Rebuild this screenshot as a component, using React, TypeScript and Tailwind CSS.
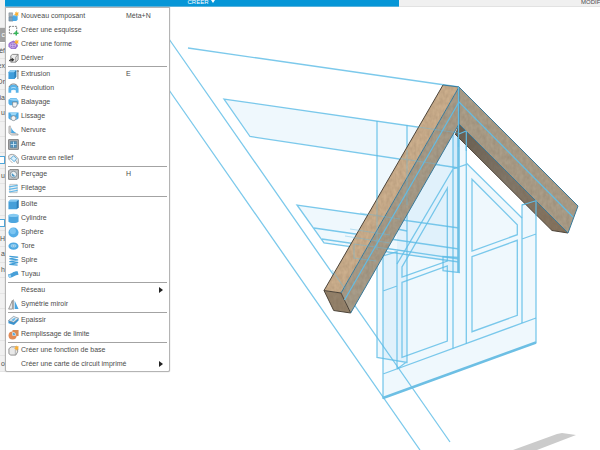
import type { ReactNode } from "react";

type Item = { label: string; icon?: ReactNode; shortcut?: string; submenu?: boolean };

const star = <path d="M9.2 0l.8 1.7 1.9-.1-1 1.6.9 1.7-1.8-.2-1 1.5-.7-1.8-1.8-.4 1.5-1.1-.2-1.9 1.5.9z" fill="#fbb034" />;

const icons = {
  component: (
    <>
      <path d="M1 2h4v4H1z" fill="#aab4bc" stroke="#7c8790" strokeWidth=".6" />
      <path d="M1 6.500h4.500v4.500H1z" fill="#7fa0b8" stroke="#6a7f90" strokeWidth=".6" />
      <path d="M5 5.500l1.500-1h4v5L9 11H5z" fill="#4aa8e4" />
      <path d="M5 5.500l1.500-1h4L9 5.800z" fill="#8fd0f6" />
      {star}
    </>
  ),
  sketch: (
    <>
      <path d="M1.500 1.500h8v8h-8z" fill="none" stroke="#666" strokeWidth=".9" strokeDasharray="2 1" />
      <path d="M9 6.500v5M6.500 9h5" stroke="#35b558" strokeWidth="1.700" />
    </>
  ),
  form: (
    <>
      <path d="M2 3.500L6 1.500l3.500 2 1.500 4L8.500 11h-5L.5 8.500v-3z" fill="#9a72cf" />
      <path d="M2.500 5.500c1.500-1.500 4-1.500 5.500 0v3c-1.500 1.500-4 1.500-5.500 0zM5.200 4.500v5M2.500 7h6" fill="none" stroke="#d9c7f2" strokeWidth=".7" />
      {star}
    </>
  ),
  derive: (
    <>
      <path d="M3 3l2-1.500h6v6L8.500 10H3z" fill="#eee" stroke="#777" strokeWidth=".9" />
      <path d="M8.500 10V4.500l2.500-3" fill="none" stroke="#777" strokeWidth=".8" />
      <path d="M1 9.500c0-2 1-3 3-3V5l3 2.400-3 2.300V8.300c-1.500 0-2.200.4-3 1.200z" fill="#333" />
    </>
  ),
  extrude: (
    <>
      <path d="M.5 3.500L2.500 1H9v7.500L7 11H.5z" fill="#3f9ddb" />
      <path d="M.5 3.500L2.500 1H9L7 3.500z" fill="#8ecdf3" />
      <path d="M7 3.500L9 1v7.500L7 11z" fill="#2b7fb8" />
      <path d="M10.800 11V1.500M9.800 3l1-1.500 1 1.500" fill="none" stroke="#555" strokeWidth=".8" />
    </>
  ),
  revolve: (
    <>
      <path d="M.5 6C1 3 3 1.500 6 1.500S11 3 11.500 6v4.500h-3V8.200C7.500 7 4.500 7 3.500 8.200v2.300h-3z" fill="#58b2e8" />
      <path d="M1 4.500C2 2 4 1 6 1s4 1 5 3.500" fill="none" stroke="#666" strokeWidth=".8" />
      <path d="M3.500 5.500c1.500-.8 3.500-.8 5 0M3.500 9c1.500-1 3.500-1 5 0" fill="none" stroke="#e2f4fe" strokeWidth=".8" />
    </>
  ),
  sweep: (
    <>
      <path d="M.5 3L3 1h6l2.500 3v4H9l-1.500-2H5v3H2L.5 7z" fill="#52aee6" />
      <path d="M1 3l2.500-1.500H9L11 4H6z" fill="#94d3f7" />
      <path d="M5 5.500h5v3.200L8.500 11h-3L5 9z" fill="#f1f4f6" stroke="#667985" strokeWidth=".8" />
    </>
  ),
  loft: (
    <>
      <path d="M.5 1.500h11V8L9 10V6.500H3V10L.5 8z" fill="#4aa8e2" />
      <path d="M2 1.500h8L8 5H4z" fill="#9ad7f8" />
      <circle cx="6" cy="7.800" r="2.700" fill="#f4f4f4" stroke="#768088" strokeWidth=".8" />
    </>
  ),
  rib: (
    <>
      <path d="M1 1.500l1.500-.5v7l8.500 2v1H4L1 9z" fill="#ddd" stroke="#8a8a8a" strokeWidth=".6" />
      <path d="M3.500 2.500c1 3 3 5 5.500 6.200H3.500z" fill="#4ba9e3" />
    </>
  ),
  web: (
    <>
      <path d="M.7.700h10.600v10.600H.7z" fill="#b3b7ba" stroke="#666" strokeWidth=".9" />
      <path d="M2.500 2.500h7v7h-7z" fill="#72b9e5" stroke="#56666f" strokeWidth=".6" />
      <path d="M4.500 2.500v7M7.500 2.500v7M2.500 4.500h7M2.500 7.500h7" stroke="#336f99" strokeWidth=".7" />
      <path d="M6 3v6M3 6h6" stroke="#d3edfc" strokeWidth=".8" />
    </>
  ),
  emboss: (
    <>
      <path d="M.7 3C4 0 8 1.500 11.300 6.500v4.800H10C8.500 7 5 4.500 1 7z" fill="#eee" stroke="#888" strokeWidth=".8" />
      <path d="M3 6l3-3 3.500 3-2.700 3.500z" fill="#d9f0fc" stroke="#479fd6" strokeWidth=".9" />
      <path d="M2 8l3 3" stroke="#888" strokeWidth=".7" />
    </>
  ),
  hole: (
    <>
      <path d="M.7 2L2 .7h9.300V10L10 11.300H.7z" fill="#c3c6c8" stroke="#666" strokeWidth=".9" />
      <circle cx="6" cy="6" r="3.500" fill="#eef2f4" stroke="#6b7d88" strokeWidth=".8" />
      <path d="M4.500 4.500A2.500 2.500 0 0 0 6 8.500L8 8z" fill="#4b97c6" />
    </>
  ),
  thread: (
    <>
      <path d="M2 1.500h8v9H2z" fill="#eef2f5" stroke="#a5adb2" strokeWidth=".7" />
      <path d="M1 4.200l9.500-1.700M1 7l9.500-1.700M1 9.800l9.500-1.700" stroke="#62b7e8" strokeWidth="1.300" />
    </>
  ),
  box: (
    <>
      <path d="M.5 3l2-2.200h9V9l-2 2.300h-9z" fill="#459fd9" />
      <path d="M.5 3l2-2.200h9L9.500 3z" fill="#86c8f0" />
      <path d="M9.500 3l2-2.200V9l-2 2.300z" fill="#2c7bb4" />
    </>
  ),
  cylinder: (
    <>
      <path d="M.5 2.500v7C2 11.500 10 11.500 11.500 9.500v-7z" fill="#4da6df" />
      <ellipse cx="6" cy="2.600" rx="5.500" ry="1.800" fill="#86caf2" />
    </>
  ),
  sphere: (
    <>
      <circle cx="6" cy="6" r="5.500" fill="#55ade6" />
      <circle cx="5.300" cy="4.500" r="3.300" fill="#7cc5f2" />
    </>
  ),
  torus: (
    <>
      <ellipse cx="6" cy="5.500" rx="5.500" ry="4" fill="#4ea8e1" />
      <ellipse cx="6" cy="5.200" rx="3.200" ry="2" fill="#9bd5f6" />
      <ellipse cx="6" cy="5.400" rx="1.600" ry=".9" fill="#fff" stroke="#3489bf" strokeWidth=".5" />
    </>
  ),
  coil: <path d="M1.500 1.500l9 .8-8.500 2 8.500 1L2 7.200l8.500 1-8.500 2 8.500.8" fill="none" stroke="#439fd8" strokeWidth="1.500" strokeLinejoin="round" />,
  pipe: (
    <>
      <path d="M1 5.500c3 0 4-3 9.500-3l1 3.800c-4 0-6 3.200-9.500 3.200C.2 9.500-.3 5.500 1 5.500z" fill="#479fd8" />
      <ellipse cx="2" cy="7.500" rx="1.400" ry="1.400" fill="#9ad3f4" />
    </>
  ),
  mirror: (
    <>
      <path d="M4.800 1.500V11H.7z" fill="#eee" stroke="#777" strokeWidth=".8" />
      <path d="M7.200 1.500V11h4.300z" fill="#48a4df" />
      <path d="M6 .5v11" stroke="#666" strokeWidth=".6" />
    </>
  ),
  thicken: (
    <>
      <path d="M.5 6L6 1.500l5.500 2v2.500L6.500 11l-6-2z" fill="#3a93cf" />
      <path d="M.5 6L6 1.500l5.500 2L6.300 8z" fill="#e5ebef" stroke="#7d8a92" strokeWidth=".6" />
      <path d="M3.500 5.700l3.200-2.500 1.800.7L6 6.600z" fill="#63b6e8" />
    </>
  ),
  fill: (
    <>
      <path d="M5 1h6.500v6.500L8 8 4.500 4.500z" fill="#d98b54" />
      <circle cx="5" cy="7" r="4.400" fill="#e28a55" />
      <path d="M5 7V3.500A3.500 3.500 0 0 1 8.500 7z" fill="#4aa6e0" stroke="#fff" strokeWidth=".6" />
    </>
  ),
  base: (
    <>
      <path d="M1 4l2.500-2h7v5.500L8.500 11H3L1 9.500z" fill="#e9e9e9" stroke="#808080" strokeWidth=".9" />
      <path d="M8 11V5l2.500-2" fill="none" stroke="#999" strokeWidth=".7" />
      {star}
    </>
  ),
};

const groups: Item[][] = [
  [
    { label: "Nouveau composant", icon: icons.component, shortcut: "Méta+N" },
    { label: "Créer une esquisse", icon: icons.sketch },
    { label: "Créer une forme", icon: icons.form },
    { label: "Dériver", icon: icons.derive },
  ],
  [
    { label: "Extrusion", icon: icons.extrude, shortcut: "E" },
    { label: "Révolution", icon: icons.revolve },
    { label: "Balayage", icon: icons.sweep },
    { label: "Lissage", icon: icons.loft },
    { label: "Nervure", icon: icons.rib },
    { label: "Ame", icon: icons.web },
    { label: "Gravure en relief", icon: icons.emboss },
  ],
  [
    { label: "Perçage", icon: icons.hole, shortcut: "H" },
    { label: "Filetage", icon: icons.thread },
  ],
  [
    { label: "Boîte", icon: icons.box },
    { label: "Cylindre", icon: icons.cylinder },
    { label: "Sphère", icon: icons.sphere },
    { label: "Tore", icon: icons.torus },
    { label: "Spire", icon: icons.coil },
    { label: "Tuyau", icon: icons.pipe },
  ],
  [
    { label: "Réseau", submenu: true },
    { label: "Symétrie miroir", icon: icons.mirror },
  ],
  [
    { label: "Epaissir", icon: icons.thicken },
    { label: "Remplissage de limite", icon: icons.fill },
  ],
  [
    { label: "Créer une fonction de base", icon: icons.base },
    { label: "Créer une carte de circuit imprimé", submenu: true },
  ],
];

// rows of the browser tree that stick out left of the menu
const treeRows = ["", "c", "èf", "ex", "Dr", "ia", "u", "", "", "[]", "u", "", "", "[]", "H", "a", "h", "", "", "", "", "", "o"];

function MenuRow({ item }: { item: Item }) {
  return (
    <li>
      <button className="flex h-[14px] w-full items-center gap-[2px] pl-[2px] text-left hover:bg-sky-100">
        <svg viewBox="0 0 12 12" className="size-[11px] shrink-0" aria-hidden="true">
          {item.icon}
        </svg>
        <span className="flex-1 whitespace-nowrap">{item.label}</span>
        {item.shortcut && <span className="w-[43px]">{item.shortcut}</span>}
        {item.submenu && (
          <svg viewBox="0 0 4 6" className="mr-[6px] h-[6px] w-[4px]" aria-hidden="true">
            <path d="M0 0l4 3-4 3z" fill="#222" />
          </svg>
        )}
      </button>
    </li>
  );
}

function CreateMenu() {
  return (
    <nav className="absolute left-0 top-0 w-[165px] rounded-b-[2px] border border-[#b4b4b4] bg-white pt-px shadow-[0_0_1px_#999]">
      {groups.map((group, i) => (
        <ul key={i}>
          {i > 0 && <li role="separator" className="mx-[2px] mt-px h-px bg-[#a3a3a3]" />}
          {group.map((item) => (
            <MenuRow key={item.label} item={item} />
          ))}
        </ul>
      ))}
    </nav>
  );
}

function Model() {
  return (
    <svg viewBox="5 7 595 443" preserveAspectRatio="xMinYMin slice" className="block h-full w-full" role="img" aria-label="Charpente">
      <defs>
        <linearGradient id="under" x1="0" y1="0" x2="1" y2="1">
          <stop offset="0" stopColor="#665d50" />
          <stop offset=".5" stopColor="#82786a" />
          <stop offset="1" stopColor="#85725c" />
        </linearGradient>
        <filter id="grain" x="0" y="0" width="100%" height="100%" colorInterpolationFilters="sRGB">
          <feTurbulence type="fractalNoise" baseFrequency=".3 .2" numOctaves="2" seed="4" result="n" />
          <feColorMatrix in="n" values="0 0 0 0 .4  0 0 0 0 .32  0 0 0 0 .24  .3 0 0 0 -.08" result="g" />
          <feComposite in="g" in2="SourceGraphic" operator="in" result="c" />
          <feMerge>
            <feMergeNode in="SourceGraphic" />
            <feMergeNode in="c" />
          </feMerge>
        </filter>
      </defs>

      {/* ground shadow */}
      <path d="M513 450L557 434l5-1 14 2-39 15z" fill="#cbcbcb" />

      {/* sketch profiles */}
      <g fill="#0e96dc" fillOpacity=".065">
        <path d="M224 99L377 121v34L250 136.500z" />
        <path d="M377 121L459 133v140l-16-2v-10l-36-6v107l-30-5z" />
        <path d="M407 155l52-22v36h-6L397 264V180z" />
        <path d="M297 205L377 216v35L324 243z" />
        <path d="M383 399L536 343V201l-14 4v13L466 163v-32l-13 3v35L397 264v-12l-14 4z" />
      </g>

      <g fill="none" stroke="#5bbbe6" strokeOpacity=".8" strokeWidth="1.300">
        <path d="M169 39L450 442M169 90L420 450M188 48L459 87" />
        <path d="M459 133L224 99l26 37.500L459 168" />
        <path d="M377 121v236.500l30 5V125M397 369l9.500-7" />
        <path d="M459 228L297 205l27 38 135 19M314 228l145 21M322 239l137 20M377 225l30 6" />
        <path d="M383 399V256l14-4.300V369M383 291l14-5M383 374L536 318" />
        <path d="M453 134v214.500M466.300 131v212.500M453 169l13.500-4.700M466.300 163L522 218M453 169L397 264" />
        <path d="M522 323V205l14-4.300V343M522 239l14-5" />
        <path d="M472 179.300L517.300 224.700v10L472 251z" />
        <path d="M472 256.700l45.300-16.400v75L472 331.700z" />
        <path d="M447.300 188.300L402 267v10l45.300-16z" />
        <path d="M402 282.300L447.300 266v75L402 357.300z" />
        <path d="M459 257.500l-16-1v14.200l17 2" />
      </g>
      <path d="M383 398L536 342.500" stroke="#6dbfe4" strokeWidth="2.600" />
      <path d="M458.500 87v185.500" stroke="#6dbfe4" strokeWidth="2.600" />

      {/* rafters */}
      <g filter="url(#grain)">
        <path d="M459 124L568 233l-16-2.500L455 134z" fill="url(#under)" />
        <path d="M459 87L578 206l-10 27L459 124z" fill="#ab9e89" />
        <path d="M459 87L341 293l9.700 20L459 124z" fill="#a79c89" />
        <path d="M443 85l16 2L341 293l-17-2.500z" fill="#ccaf8d" />
        <path d="M324 290.500l17 2.500 9.700 20-17-2.500z" fill="#94826b" />
      </g>
      <g fill="none" stroke="#4d4439" strokeWidth="1">
        <path d="M443 85L324 290.500l9.700 20 17 2.500M324 290.500l17 2.500 9.700 20M455 134l97 96.500 16 2.500" />
      </g>
      <g fill="none" stroke="#37799a" strokeWidth="1">
        <path d="M443 85l16 2L341 293M350.700 313L459 124l109 109 10-27L459 87v37" />
      </g>
      <g fill="none" stroke="#62bce4" strokeWidth="1.200">
        <path d="M344.500 300L459 102l114 115" />
        <path d="M458.500 87v60M466.300 131v20M459 134l7-3" />
        <path d="M522 205l14-4.300v15" />
        <path d="M418 127l41 6M400 158.500l40 6M377 190v60M407 150v55M354 244l50 7M354 244v14l22 3M345 236l45 7M360 213l40 6M350 229l40 6M332 270l13 19" strokeOpacity=".4" />
      </g>
    </svg>
  );
}

export default function App() {
  return (
    <div className="flex h-screen flex-col overflow-hidden bg-white font-['Liberation_Sans',Arial,sans-serif] text-[7px] leading-[14px] text-[#4c4c4c]">
      <header className="flex h-[7px] shrink-0 overflow-hidden bg-[#f0f0f0] pl-[5px] text-[6px] leading-[5px]">
        <button className="flex w-[394px] justify-center border-b border-[#58b2dc] bg-[#0696d7] pr-[2px] text-white">
          <span>CRÉER</span>
          <svg viewBox="0 0 4 3" className="ml-[2px] h-[3px] w-[4px]" aria-hidden="true">
            <path d="M0 0h4L2 3z" fill="#fff" />
          </svg>
        </button>
        <div className="flex-1 overflow-hidden border-b border-[#e2e2e2]">
          <button className="ml-[182px] block whitespace-nowrap">MODIFIER</button>
        </div>
      </header>
      <main className="flex min-h-0 flex-1">
        <aside className="w-[5px] shrink-0 overflow-hidden">
          <ul className="flex h-[365px] flex-col bg-[#f1f1f1] pt-[5px]">
            {treeRows.map((text, i) => (
              <li
                key={i}
                className={
                  i === 1
                    ? "flex flex-1 items-center justify-end border-b border-white bg-[#a0a0a0] leading-[8px] text-white"
                    : "flex flex-1 items-center justify-end border-b border-[#e4e4e4] leading-[8px]"
                }
              >
                {text === "[]" ? <span className="size-[8px] shrink-0 border border-[#4ba6dc] bg-white" /> : text}
              </li>
            ))}
          </ul>
        </aside>
        <section className="relative min-w-0 flex-1">
          <Model />
          <CreateMenu />
        </section>
      </main>
    </div>
  );
}
